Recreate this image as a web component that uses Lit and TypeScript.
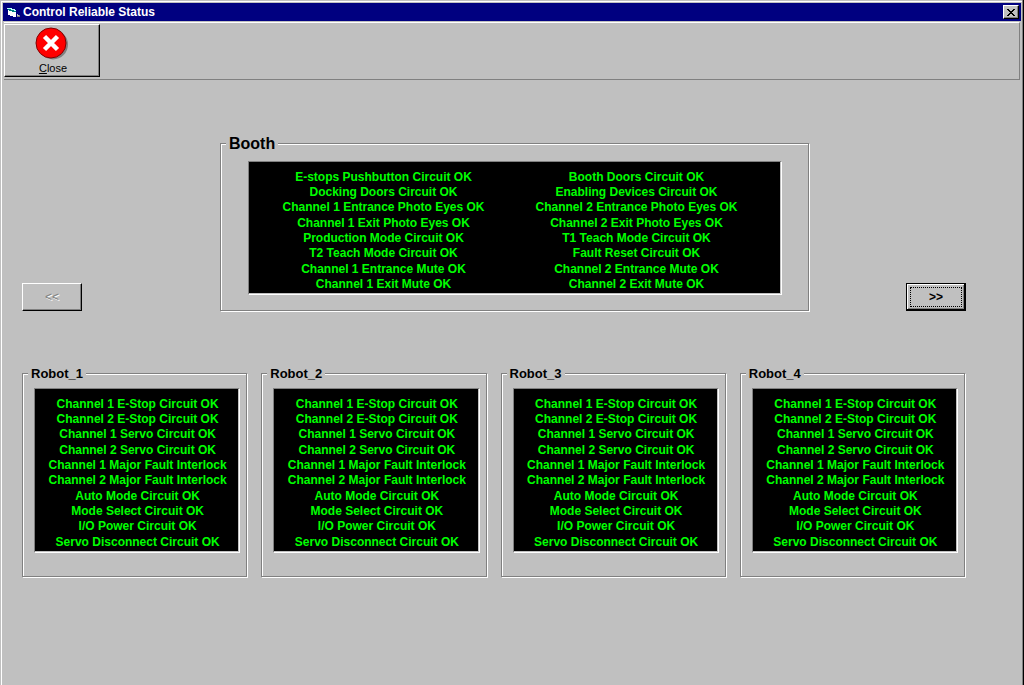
import { LitElement, html, css } from "lit";
import { customElement, property } from "lit/decorators.js";

const BOOTH_LEFT = [
  "E-stops Pushbutton Circuit OK", "Docking Doors Circuit OK",
  "Channel 1 Entrance Photo Eyes OK", "Channel 1 Exit Photo Eyes OK",
  "Production Mode Circuit OK", "T2 Teach Mode Circuit OK",
  "Channel 1 Entrance Mute OK", "Channel 1 Exit Mute OK",
];
const BOOTH_RIGHT = [
  "Booth Doors Circuit OK", "Enabling Devices Circuit OK",
  "Channel 2 Entrance Photo Eyes OK", "Channel 2 Exit Photo Eyes OK",
  "T1 Teach Mode Circuit OK", "Fault Reset Circuit OK",
  "Channel 2 Entrance Mute OK", "Channel 2 Exit Mute OK",
];
const ROBOT = [
  "Channel 1 E-Stop Circuit OK", "Channel 2 E-Stop Circuit OK",
  "Channel 1 Servo Circuit OK", "Channel 2 Servo Circuit OK",
  "Channel 1 Major Fault Interlock", "Channel 2 Major Fault Interlock",
  "Auto Mode Circuit OK", "Mode Select Circuit OK",
  "I/O Power Circuit OK", "Servo Disconnect Circuit OK",
];
const ROBOTS = ["Robot_1", "Robot_2", "Robot_3", "Robot_4"];

/** Black sunken display with one or more columns of status lines. */
@customElement("status-display")
export class StatusDisplay extends LitElement {
  @property({ attribute: false }) columns: string[][] = [];

  static styles = css`
    :host {
      display: flex;
      background: #000;
      border: 1px solid;
      border-color: #808080 #fff #fff #808080;
      box-shadow: inset -1px -1px #c0c0c0;
      color: #0f0;
    }
    .column {
      flex: 1;
      min-width: 0;
      margin: 0;
      padding: 0;
      list-style: none;
      text-align: center;
      white-space: nowrap;
    }
    .line {
      font: bold 12px/15px "Liberation Sans", Arial, sans-serif;
    }
    .line:nth-child(3n) {
      margin-bottom: 1px;
    }
  `;

  render() {
    return this.columns.map(
      (lines) => html`<ul class="column">
        ${lines.map((t) => html`<li class="line">${t}</li>`)}
      </ul>`
    );
  }
}

@customElement("app-root")
export class AppRoot extends LitElement {
  static styles = css`
    :host {
      display: block;
      font: 12px/15px "Liberation Sans", Arial, sans-serif;
      color: #000;
    }
    * {
      box-sizing: border-box;
    }
    .window {
      min-height: 100vh;
      background: #c0c0c0;
      border-right: 1px solid #000;
      box-shadow: inset -1px 0 #808080, inset 1px 1px #c0c0c0, inset 2px 2px #fff;
      padding: 3px 2px 0 3px;
    }
    .titlebar {
      display: flex;
      align-items: center;
      gap: 2px;
      height: 18px;
      padding: 0 2px 0 4px;
      background: #000080;
      color: #fff;
    }
    .title {
      flex: 1;
      margin: 0;
      font-size: 12px;
      line-height: 18px;
    }
    .button {
      display: flex;
      align-items: center;
      justify-content: center;
      margin: 0;
      padding: 0;
      border: 1px solid;
      border-color: #fff #000 #000 #fff;
      border-radius: 0;
      background: #c0c0c0;
      color: #000;
      font: inherit;
      box-shadow: inset -1px -1px #808080;
    }
    .window-close {
      width: 16px;
      height: 14px;
    }
    .toolbar {
      display: flex;
      height: 58px;
      margin: 1px 1px 0;
      padding-top: 1px;
      border: solid;
      border-width: 1px 1px 1px 0;
      border-color: #fff #808080 #808080;
    }
    .tool {
      flex-direction: column;
      justify-content: flex-start;
      width: 96px;
      height: 53px;
      padding: 2px 0 0 2px;
    }
    .tool-icon {
      margin-right: 2px;
    }
    .tool-label {
      line-height: 16px;
      font-size: 11px;
    }
    .content {
      display: grid;
      grid-template-columns: 60px minmax(0, 1fr) 60px;
      row-gap: 53px;
      padding: 53px 55px 60px 19px;
    }
    .nav {
      align-self: end;
      height: 28px;
      font-weight: bold;
    }
    .nav:disabled {
      color: #808080;
      font-weight: normal;
      text-shadow: 1px 1px #fff;
    }
    .nav.focused {
      border: 1px solid #000;
      box-shadow: inset -1px -1px #000, inset 1px 1px #fff, inset -2px -2px #808080;
      outline: 1px dotted #000;
      outline-offset: -5px;
    }
    .group {
      min-width: 0;
      margin: 0;
      padding: 0;
      border: 1px solid #808080;
      box-shadow: 1px 1px #fff, inset 1px 1px #fff;
    }
    .legend {
      margin-left: 5px;
      padding: 2px 3px 0;
      background: #c0c0c0;
      font-weight: bold;
      font-size: 13px;
      line-height: 16px;
    }
    .booth {
      margin: 0 97px 0 138px;
    }
    .booth .legend {
      font-size: 16px;
      line-height: 18px;
    }
    .booth-display {
      margin: 8px 26px 15px 27px;
      padding: 8px 18px 2px 8px;
    }
    .robots {
      grid-column: 1 / -1;
      display: grid;
      grid-template-columns: repeat(4, minmax(0, 1fr));
      gap: 14px;
      padding-right: 1px;
    }
    .robot-display {
      margin: 6px 6px 23px 11px;
      padding: 8px 0 2px 1px;
    }
  `;

  render() {
    return html`
      <main class="window">
        <header class="titlebar">
          <svg width="14" height="12" viewBox="0 0 14 12" shape-rendering="crispEdges" aria-hidden="true">
            <path fill="#fff" d="M1 4h2v1h3v1h3v5H6v-1H3V9H1z" />
            <path fill="#c0ffff" d="M0 2h5v1h3v1h1v1H6V4H3V3H0z" />
            <path fill="#008080" d="M1 3h3v1h3v1h2v1H5V5H2V4H1z" />
            <path fill="#808080" d="M10 8h1v1h2v2h-3z" />
            <path fill="#c0c0c0" d="M10 8h1v1h1v1h-2z" />
          </svg>
          <h1 class="title">Control Reliable Status</h1>
          <button class="button window-close" aria-label="Close window">
            <svg width="8" height="7" viewBox="0 0 8 7" shape-rendering="crispEdges" aria-hidden="true">
              <path d="M0 0h2v1h1v1h2V1h1V0h2v1H7v1H6v1H5v1h1v1h1v1h1v1H6V6H5V5H3v1H2v1H0V6h1V5h1V4h1V3H2V2H1V1H0z" />
            </svg>
          </button>
        </header>
        <nav class="toolbar">
          <button class="button tool">
            <svg class="tool-icon" width="34" height="33" viewBox="0 0 34 33" aria-hidden="true">
              <circle cx="18" cy="17.500" r="15" fill="#808080" />
              <circle cx="16" cy="16" r="15" fill="#f00" stroke="#800000" />
              <path d="M9.500 9.500l13 13M22.500 9.500l-13 13" stroke="#fff" stroke-width="4.500" />
            </svg>
            <span class="tool-label"><u>C</u>lose</span>
          </button>
        </nav>
        <section class="content">
          <button class="button nav" disabled>&lt;&lt;</button>
          <fieldset class="group booth">
            <legend class="legend">Booth</legend>
            <status-display class="booth-display" .columns=${[BOOTH_LEFT, BOOTH_RIGHT]}></status-display>
          </fieldset>
          <button class="button nav focused">&gt;&gt;</button>
          <div class="robots">
            ${ROBOTS.map(
              (name) => html`<fieldset class="group robot">
                <legend class="legend">${name}</legend>
                <status-display class="robot-display" .columns=${[ROBOT]}></status-display>
              </fieldset>`
            )}
          </div>
        </section>
      </main>
    `;
  }
}
